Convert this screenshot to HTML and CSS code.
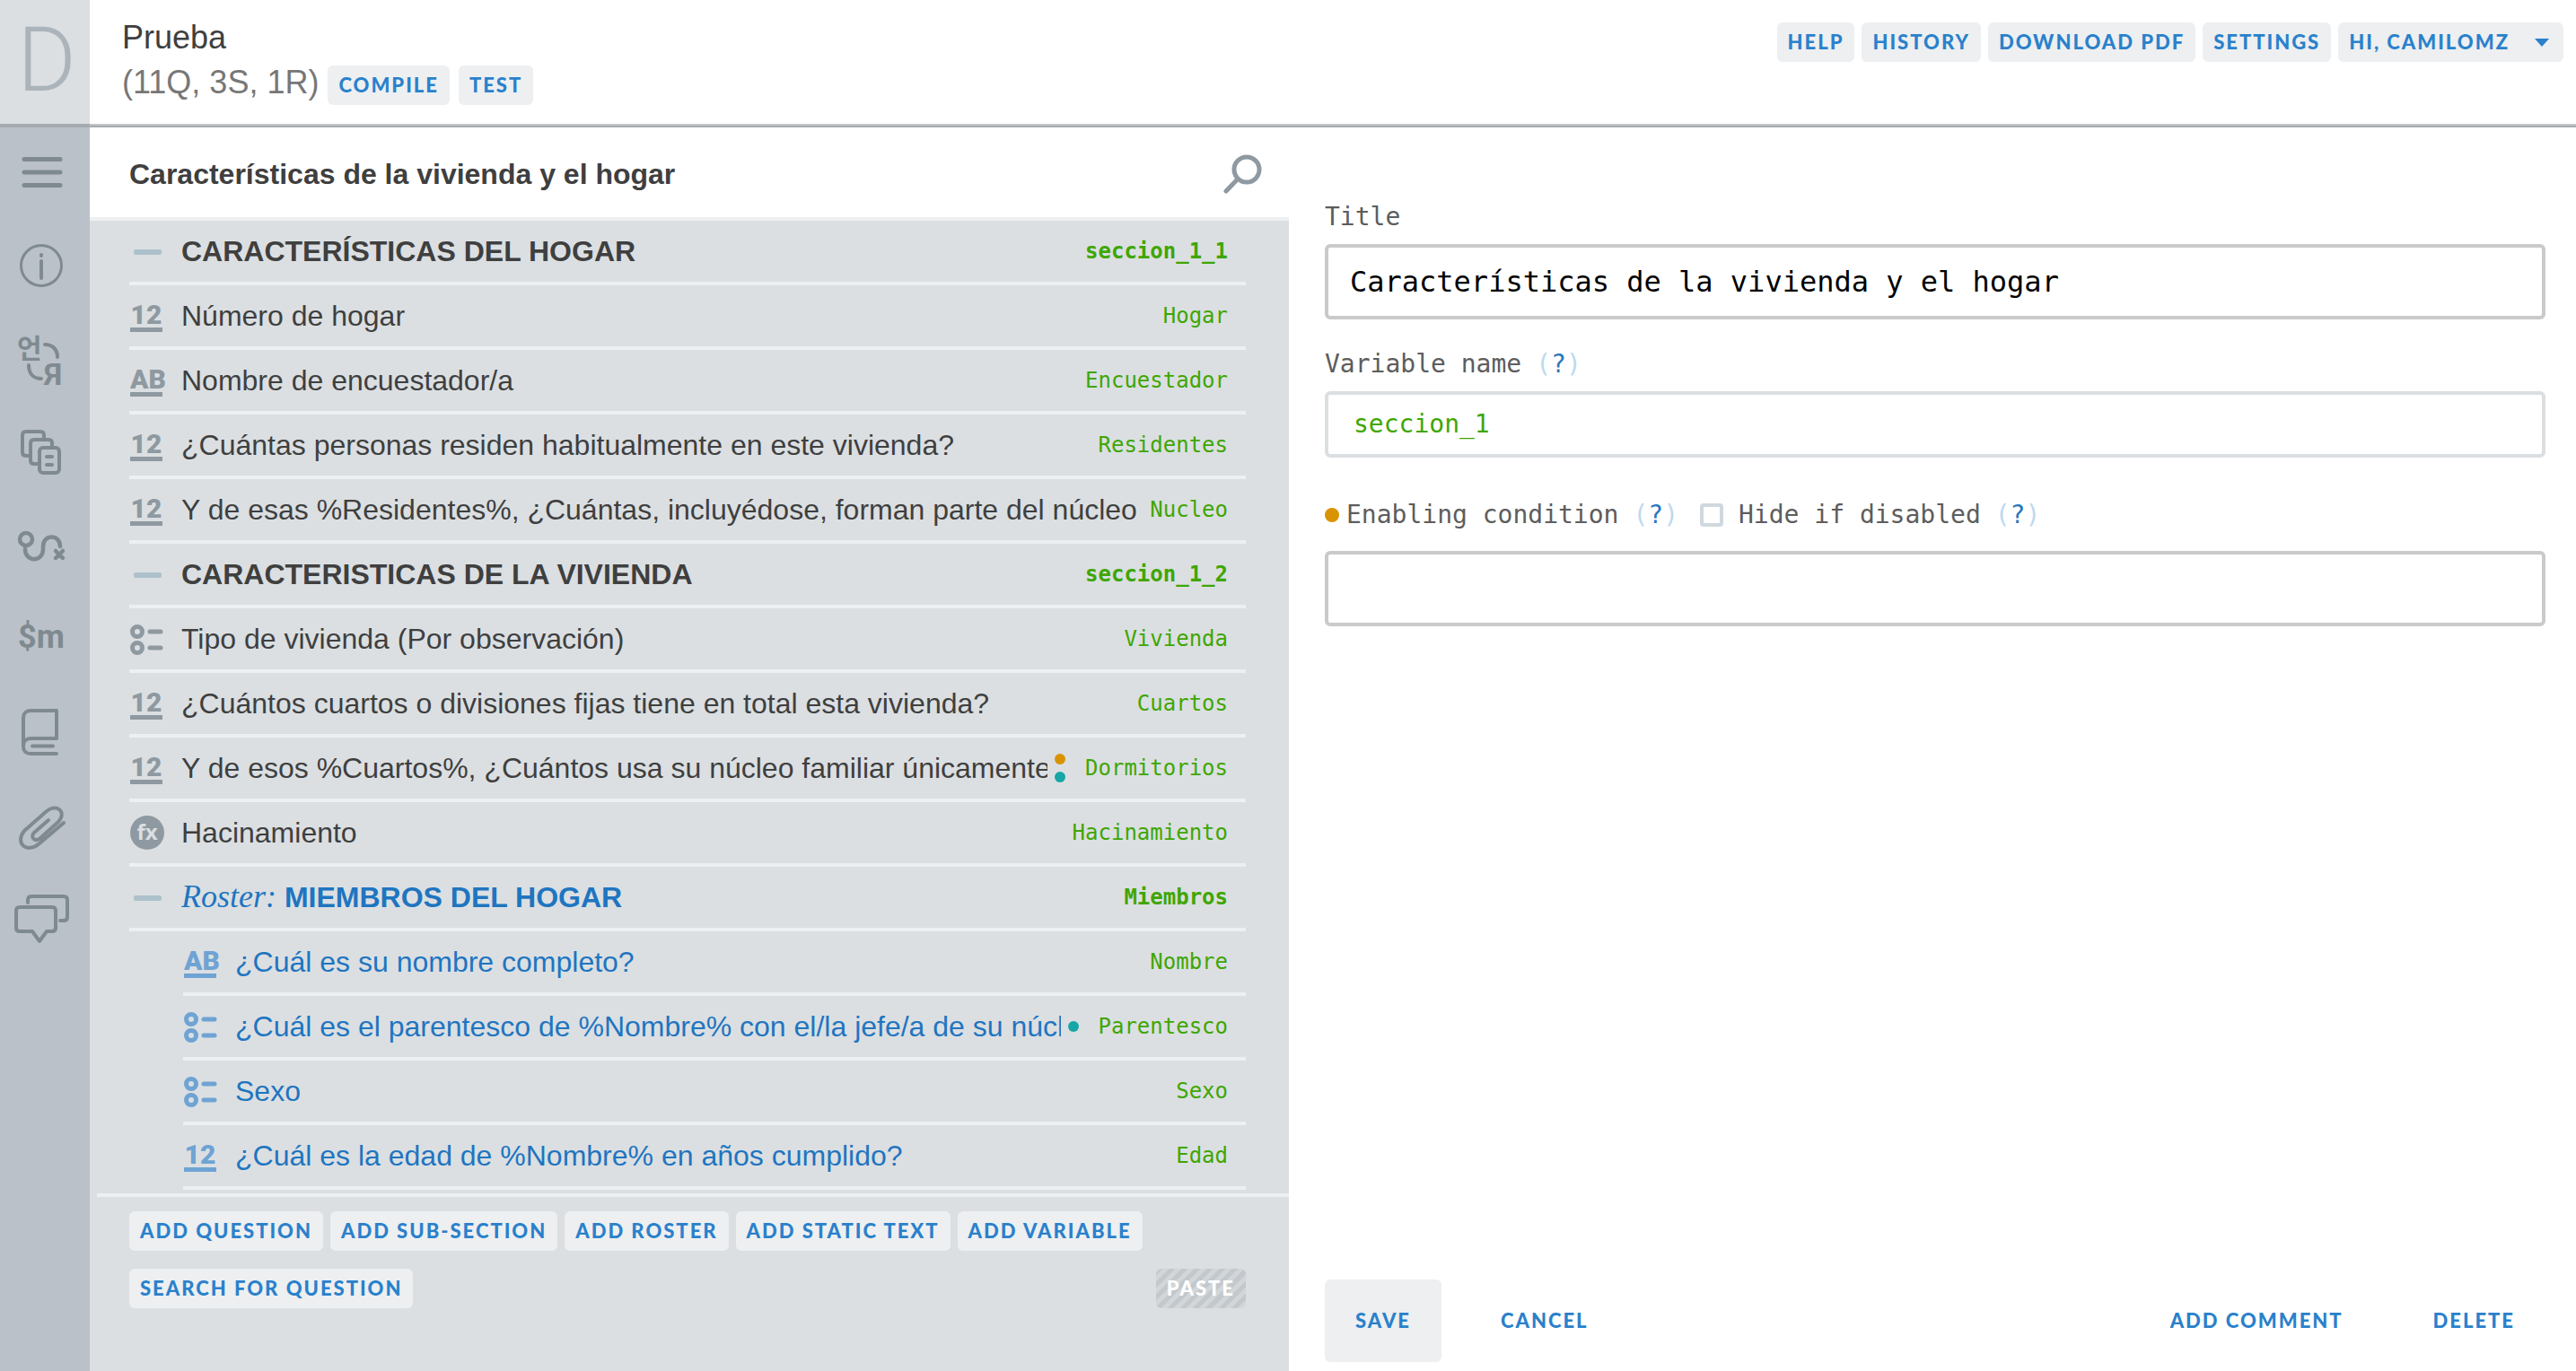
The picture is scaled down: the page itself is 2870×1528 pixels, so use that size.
FILE: index.html
```html
<!DOCTYPE html>
<html lang="es">
<head>
<meta charset="utf-8">
<title>Prueba</title>
<link rel="stylesheet" href="styles.css">
</head>
<body>
<svg class="sprite" aria-hidden="true">
  <symbol id="minus" viewBox="0 0 40 40"><rect x="5" y="18" width="31" height="6" rx="2" fill="#adc1cb"/></symbol>
  <symbol id="options" viewBox="0 0 40 40"><g fill="none" stroke="currentColor" stroke-width="5"><circle cx="9" cy="12" r="5.500"/><circle cx="9" cy="30" r="5.500"/><path d="M23 12h12M23 30h12" stroke-linecap="round"/></g></symbol>
</svg>
<header class="topbar">
  <a class="logo" href="#">D</a>
  <div class="heading">
    <h1>Prueba</h1>
    <div class="stats"><span>(11Q, 3S, 1R)</span><button class="btn">COMPILE</button><button class="btn">TEST</button></div>
  </div>
  <nav class="topnav">
    <a class="btn" href="#">HELP</a>
    <a class="btn" href="#">HISTORY</a>
    <a class="btn" href="#">DOWNLOAD PDF</a>
    <button class="btn">SETTINGS</button>
    <button class="btn user">HI, CAMILOMZ<span class="caret"></span></button>
  </nav>
</header>
<div class="workspace">
  <nav class="sidebar">
    <button aria-label="Sections"><svg viewBox="0 0 100 104"><path d="M27 35.500h40M27 50h40M27 64.500h40" stroke-width="5"/></svg></button>
    <button aria-label="Information"><svg viewBox="0 0 100 104"><circle cx="46" cy="50" r="22.500" stroke-width="3"/><path d="M46 45v19M46 38v1" stroke-width="4"/></svg></button>
    <button aria-label="Translations"><svg viewBox="0 0 100 104"><text x="19" y="49" class="hangul">언</text><path d="M50 34c9 0 14 6 14 14M32 57c0 9 5 15 14 15" stroke-width="4"/><text x="49" y="79" class="cyrillic">Я</text></svg></button>
    <button aria-label="Categories"><svg viewBox="0 0 100 104"><g stroke-width="4"><path d="M34 54h-5q-4 0-4-4V31q0-4 4-4h16q4 0 4 4v5"/><path d="M43 63h-5q-4 0-4-4V40q0-4 4-4h16q4 0 4 4v5"/><rect x="44" y="45" width="22" height="28" rx="4"/><path d="M52 55h6M52 64h6"/></g></svg></button>
    <button aria-label="Critical rules"><svg viewBox="0 0 100 104"><g stroke-width="4.500"><circle cx="29" cy="43" r="7"/><path d="M28 54c0 15 20 15 20 0v-3c0-14 19-14 19 0M62 56l8 8M70 56l-8 8"/></g></svg></button>
    <button aria-label="Macros"><svg viewBox="0 0 100 104"><text x="46" y="60" text-anchor="middle" class="macro">$m</text></svg></button>
    <button aria-label="Lookup tables"><svg viewBox="0 0 100 104"><path d="M63 74H34c-5 0-8-3-8-8V34c0-5 3-8 8-8h29v31H34c-5 0-8 3-8 8M36 65.500h23" stroke-width="4"/></svg></button>
    <button aria-label="Attachments"><svg viewBox="0 0 100 104"><path d="M71 47 44 70c-14 12-28 0-17-14l25-22c11-9 23 1 13 12L45 64c-6 5-12-1-7-6l16-14" stroke-width="4"/></svg></button>
    <button aria-label="Comments"><svg viewBox="0 0 100 104"><path d="M31 32v-3q0-4 4-4h36q4 0 4 4v19q0 4-4 4h-4M22 37h36q4 0 4 4v19q0 4-4 4H52l-8 11-8-11H22q-4 0-4-4V41q0-4 4-4z" stroke-width="4"/></svg></button>
  </nav>
  <section class="tree">
    <div class="tree-head">
      <h2>Características de la vivienda y el hogar</h2>
      <button class="search" aria-label="Search"><svg viewBox="0 0 44 44"><g fill="none" stroke="#8e99a1" stroke-width="5" stroke-linecap="round"><circle cx="27" cy="17" r="14"/><path d="M16.500 28 4 41"/></g></svg></button>
    </div>
    <ul class="items">
      <li class="group"><svg class="ico"><use href="#minus"/></svg><a href="#" class="name">CARACTERÍSTICAS DEL HOGAR</a><span class="var">seccion_1_1</span></li>
      <li><span class="ico type">12</span><a href="#" class="name">Número de hogar</a><span class="var">Hogar</span></li>
      <li><span class="ico type">AB</span><a href="#" class="name">Nombre de encuestador/a</a><span class="var">Encuestador</span></li>
      <li><span class="ico type">12</span><a href="#" class="name">¿Cuántas personas residen habitualmente en este vivienda?</a><span class="var">Residentes</span></li>
      <li><span class="ico type">12</span><a href="#" class="name">Y de esas %Residentes%, ¿Cuántas, incluyédose, forman parte del núcleo</a><span class="var">Nucleo</span></li>
      <li class="group"><svg class="ico"><use href="#minus"/></svg><a href="#" class="name">CARACTERISTICAS DE LA VIVIENDA</a><span class="var">seccion_1_2</span></li>
      <li><svg class="ico"><use href="#options"/></svg><a href="#" class="name">Tipo de vivienda (Por observación)</a><span class="var">Vivienda</span></li>
      <li><span class="ico type">12</span><a href="#" class="name">¿Cuántos cuartos o divisiones fijas tiene en total esta vivienda?</a><span class="var">Cuartos</span></li>
      <li><span class="ico type">12</span><a href="#" class="name">Y de esos %Cuartos%, ¿Cuántos usa su núcleo familiar únicamente</a><span class="marks"><i class="mark enabling"></i><i class="mark validation"></i></span><span class="var">Dormitorios</span></li>
      <li><span class="ico formula">fx</span><a href="#" class="name">Hacinamiento</a><span class="var">Hacinamiento</span></li>
      <li class="group roster"><svg class="ico"><use href="#minus"/></svg><a href="#" class="name"><em>Roster:</em> MIEMBROS DEL HOGAR</a><span class="var">Miembros</span></li>
      <li class="roster nested"><span class="ico type">AB</span><a href="#" class="name">¿Cuál es su nombre completo?</a><span class="var">Nombre</span></li>
      <li class="roster nested"><svg class="ico"><use href="#options"/></svg><a href="#" class="name">¿Cuál es el parentesco de %Nombre% con el/la jefe/a de su núcleo</a><span class="marks"><i class="mark validation"></i></span><span class="var">Parentesco</span></li>
      <li class="roster nested"><svg class="ico"><use href="#options"/></svg><a href="#" class="name">Sexo</a><span class="var">Sexo</span></li>
      <li class="roster nested"><span class="ico type">12</span><a href="#" class="name">¿Cuál es la edad de %Nombre% en años cumplido?</a><span class="var">Edad</span></li>
    </ul>
    <div class="tree-actions">
      <button class="btn">ADD QUESTION</button>
      <button class="btn">ADD SUB-SECTION</button>
      <button class="btn">ADD ROSTER</button>
      <button class="btn">ADD STATIC TEXT</button>
      <button class="btn">ADD VARIABLE</button>
      <div class="row-end">
        <button class="btn">SEARCH FOR QUESTION</button>
        <button class="btn paste" disabled>PASTE</button>
      </div>
    </div>
  </section>
  <form class="editor">
    <div class="field">
      <label for="title">Title</label>
      <input id="title" class="box" value="Características de la vivienda y el hogar">
    </div>
    <div class="field">
      <div class="labels"><label for="variable">Variable name</label><a class="help" href="#">(<b>?</b>)</a></div>
      <input id="variable" class="box variable" value="seccion_1">
    </div>
    <div class="field condition">
      <div class="labels">
        <i class="mark enabling large"></i><label for="enabling">Enabling condition</label><a class="help" href="#">(<b>?</b>)</a>
        <input type="checkbox" id="hide" class="check"><label for="hide">Hide if disabled</label><a class="help" href="#">(<b>?</b>)</a>
      </div>
      <textarea id="enabling" class="box" rows="1"></textarea>
    </div>
    <div class="editor-actions">
      <button type="button" class="btn big save">SAVE</button>
      <button type="button" class="btn big">CANCEL</button>
      <button type="button" class="btn big push">ADD COMMENT</button>
      <button type="button" class="btn big">DELETE</button>
    </div>
  </form>
</div>
</body>
</html>
```
FILE: styles.css
```css
* { box-sizing: border-box; }

body {
  margin: 0;
  min-height: 100vh;
  display: flex;
  flex-direction: column;
  background: #fff;
  color: #3f3f3f;
  font-family: "Liberation Sans", Arial, sans-serif;
  font-size: 32px;
}

h1, h2, ul { margin: 0; padding: 0; }
a { color: inherit; text-decoration: none; }
button { border: 0; background: none; padding: 0; cursor: pointer; }
.sprite { position: absolute; width: 0; height: 0; }

.btn {
  display: inline-block;
  height: 44px;
  padding: 0 12px;
  border-radius: 6px;
  background: #edeff1;
  color: #2a81cb;
  font: 900 22px/44px Lato, sans-serif;
  letter-spacing: 2px;
  white-space: nowrap;
}

/* top bar */
.topbar {
  display: flex;
  height: 142px;
  border-bottom: 2px solid #a6aaae;
  box-shadow: inset 0 -2px #c1c6ca;
}
.logo {
  display: flex;
  align-items: center;
  justify-content: center;
  width: 100px;
  padding: 0 0 6px 4px;
  background: #dbdfe2;
  box-shadow: inset 0 -2px #a5abb3;
  color: #abb4bb;
  font: 300 100px/1 Roboto, sans-serif;
}
.heading { flex: 1; padding: 17px 36px 0; }
.heading h1 { font-size: 36px; font-weight: 400; line-height: 50px; }
.stats { display: flex; align-items: flex-end; gap: 10px; color: #777; font-size: 36px; line-height: 50px; }
.topnav { display: flex; gap: 8px; padding: 25px 14px 0 0; }
.user { display: flex; align-items: center; gap: 28px; padding-right: 16px; }
.caret {
  border: 8px solid transparent;
  border-top: 9px solid #2a81cb;
  border-bottom: 0;
}

/* columns */
.workspace {
  flex: 1;
  display: grid;
  grid-template-columns: 100px minmax(0, 1336fr) minmax(0, 1434fr);
}

.sidebar { background: #bac1c9; display: flex; flex-direction: column; }
.sidebar button { height: 104px; }
.sidebar svg {
  display: block;
  width: 100px;
  height: 104px;
  fill: none;
  stroke: #7f8a90;
  stroke-linecap: round;
  stroke-linejoin: round;
}
.sidebar text { fill: #7f8a90; stroke: none; }
.hangul { font: 700 30px "Noto Sans CJK KR", sans-serif; }
.cyrillic { font: 700 34px Roboto, sans-serif; }
.macro { font: 700 36px Roboto, sans-serif; }

/* questionnaire tree */
.tree { background: #dbdfe2; }
.tree-head {
  display: flex;
  align-items: center;
  justify-content: space-between;
  height: 104px;
  padding: 4px 30px 0 44px;
  background: #fff;
  border-bottom: 4px solid #edeff1;
}
.tree-head h2 { font-size: 32px; line-height: 36px; }
.search svg { display: block; width: 44px; height: 44px; }

.items { list-style: none; padding: 0 48px 0 44px; }
.items li {
  display: flex;
  align-items: center;
  height: 72px;
  padding-right: 20px;
  border-bottom: 4px solid #edeff1;
}
.items .nested { margin-left: 60px; }
.roster { color: #1f75c0; }
.ico { flex: none; width: 40px; height: 40px; margin-right: 18px; color: #8e99a1; }
.roster .ico { color: #6fa3d3; }
.type {
  width: 36px;
  height: 36px;
  margin: 0 21px 0 1px;
  border-bottom: 5px solid;
  font: 900 30px/34px Roboto, sans-serif;
  text-align: center;
}
.formula {
  width: 38px;
  height: 38px;
  margin: 0 19px 0 1px;
  border-radius: 50%;
  background: #8e99a1;
  font: 700 24px/36px "Noto Sans", sans-serif;
  text-align: center;
}
.items .formula { color: #dbdfe2; }
.name { flex: 1; overflow: hidden; white-space: nowrap; line-height: 40px; }
.group { font-weight: 700; }
.name em { font: italic 400 36px/36px "Liberation Serif", serif; }
.var {
  padding-left: 14px;
  color: #3fa600;
  font-family: "DejaVu Sans Mono", monospace;
  font-size: 24px;
}
.marks { display: flex; flex-direction: column; gap: 8px; padding: 0 8px; }
.mark { width: 12px; height: 12px; border-radius: 50%; }
.enabling { background: #d99300; }
.validation { background: #17a6a6; }
.large { width: 16px; height: 16px; margin-right: 8px; }

.tree-actions {
  display: flex;
  flex-wrap: wrap;
  gap: 20px 8px;
  margin: 4px 0 0 8px;
  padding: 16px 48px 16px 36px;
  border-top: 4px solid #edeff1;
}
.row-end { display: flex; justify-content: space-between; width: 100%; }
.paste {
  color: #fff;
  background: repeating-linear-gradient(135deg, #c3c8cc 0 5px, #d2d6d9 5px 10px);
}

/* editor */
.editor {
  display: flex;
  flex-direction: column;
  gap: 32px;
  padding: 82px 34px 10px 40px;
  color: #5d5d5d;
  font-family: "DejaVu Sans Mono", monospace;
  font-size: 28px;
  line-height: 36px;
}
.field { display: flex; flex-direction: column; gap: 12px; }
.condition { gap: 22px; padding-top: 14px; }
.labels { display: flex; align-items: center; }
.box {
  display: block;
  width: 100%;
  height: 84px;
  padding: 0 24px;
  border: 4px solid #cacaca;
  border-radius: 6px;
  background: #fff;
  color: #000;
  font: 32px/76px "DejaVu Sans Mono", monospace;
  resize: none;
}
.box.variable { height: 74px; padding: 0 28px; border-color: #dbdfe2; color: #3fa600; font-size: 28px; }
.help { margin-left: 16px; color: #bdd9f0; }
.help b { color: #2a77bd; font-weight: 400; }
.check {
  appearance: none;
  width: 26px;
  height: 26px;
  margin: 0 17px 0 24px;
  border: 4px solid #cfd8dd;
  border-radius: 4px;
}
.editor-actions { display: flex; gap: 32px; margin-top: auto; }
.big { height: 92px; padding: 0 34px; background: none; line-height: 92px; }
.save { background: #edeff1; }
.push { margin-left: auto; }
```
